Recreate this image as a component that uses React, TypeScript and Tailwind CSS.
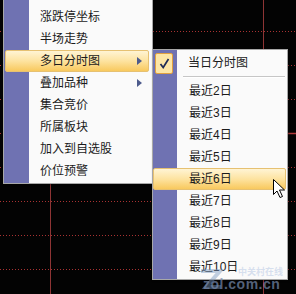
import React from "react";

const leftItems = [
  { label: "涨跌停坐标" },
  { label: "半场走势" },
  { label: "多日分时图", arrow: true, active: true },
  { label: "叠加品种", arrow: true },
  { label: "集合竞价" },
  { label: "所属板块" },
  { label: "加入到自选股" },
  { label: "价位预警" },
];

const subItems = ["最近2日", "最近3日", "最近4日", "最近5日", "最近6日", "最近7日", "最近8日", "最近9日", "最近10日"];

function Arrow() {
  return (
    <svg className="ml-auto mr-[10px]" width="5" height="8" viewBox="0 0 5 8">
      <path d="M0 0 L5 4 L0 8 Z" fill="#4d5b8c" />
    </svg>
  );
}

function Chart() {
  const ys = [31, 65, 99, 133, 167, 201, 235, 269];
  return (
    <svg className="absolute inset-0" width="296" height="294" viewBox="0 0 296 294">
      <rect width="296" height="294" fill="#030303" />
      {ys.map((y) => (
        <line key={y} x1="0" x2="296" y1={y + 0.5} y2={y + 0.5} stroke="#a83232" strokeWidth="1" strokeDasharray="1 2" />
      ))}
      <line x1="287" x2="296" y1="133.5" y2="133.5" stroke="#b03a3a" strokeWidth="1.5" />
      <line x1="50.5" x2="50.5" y1="0" y2="294" stroke="#8e3434" strokeWidth="1" />
      <line x1="263.5" x2="263.5" y1="0" y2="294" stroke="#8e3434" strokeWidth="1" />
    </svg>
  );
}

const hl =
  "rounded-[2px] border border-[#e6c172] bg-[linear-gradient(to_bottom,#fff4d4,#fde3a0_50%,#f8c95e)]";

export default function App() {
  return (
    <div className="relative w-[296px] h-[294px] overflow-hidden bg-black font-['Liberation_Sans','Noto_Sans_CJK_SC',sans-serif] text-[12px] text-[#1b1b1b]">
      <Chart />

      {/* main context menu */}
      <div className="absolute left-[3px] top-[-1px] w-[150px] flex border border-[#a8a8a8] bg-[#fafafa] shadow-[1px_1px_2px_rgba(0,0,0,0.4)]">
        <div className="relative flex-1 flex flex-col pt-[6px] pb-[1px] bg-[linear-gradient(to_right,#6f72b2_25px,transparent_25px)]">
          {leftItems.map((it) =>
            it.active ? (
              <div key={it.label} className={`h-[22px] ml-[1px] mr-[3px] flex items-center pl-[34px] ${hl}`}>
                <span>{it.label}</span>
                <svg className="ml-auto mr-[6px]" width="5" height="8" viewBox="0 0 5 8">
                  <path d="M0 0 L5 4 L0 8 Z" fill="#4d5b8c" />
                </svg>
              </div>
            ) : (
              <div key={it.label} className="h-[22px] flex items-center pl-[36px]">
                <span>{it.label}</span>
                {it.arrow && <Arrow />}
              </div>
            )
          )}
        </div>
      </div>

      {/* submenu */}
      <div className="absolute left-[152px] top-[49px] w-[136px] flex flex-col border border-[#a8a8a8] pt-[2px] pb-[1px] bg-[linear-gradient(to_right,#6f72b2_24px,#fafafa_24px)] shadow-[1px_1px_2px_rgba(0,0,0,0.4)]">
        <div className="h-[22px] flex items-center gap-[15px] pl-[2px]">
          <div className="w-[18px] h-[21px] rounded-[2px] border border-[#e0a040] bg-[#fde6a6] flex items-center justify-center">
            <svg width="11" height="11" viewBox="0 0 11 11">
              <path d="M1.5 6 L4.2 9.5 L9.5 1" fill="none" stroke="#1e2a55" strokeWidth="1.7" />
            </svg>
          </div>
          <span>当日分时图</span>
        </div>
        <div className="h-[6px] pl-[30px] pr-[2px] pt-[2px] flex flex-col">
          <div className="h-px bg-[#c6c6c6]" />
          <div className="h-px bg-white" />
        </div>
        {subItems.map((s) =>
          s === "最近6日" ? (
            <div key={s} className={`h-[22px] mr-[1px] flex items-center pl-[35px] ${hl}`}>
              <span>{s}</span>
            </div>
          ) : (
            <div key={s} className="h-[22px] flex items-center pl-[36px]">
              <span>{s}</span>
            </div>
          )
        )}
      </div>

      {/* watermark */}
      <div className="absolute left-[198px] top-[268px] w-[98px] h-[26px] flex pointer-events-none">
        <svg className="shrink-0 -mr-[24px]" width="26" height="26" viewBox="0 0 26 26">
          <path d="M3 3 L22 3 L8 19 L23 19" fill="none" stroke="rgba(120,150,190,0.45)" strokeWidth="4" />
        </svg>
        <div className="flex flex-col items-start">
          <div className="ml-[38px] text-[9px] leading-[9px] font-bold text-[rgba(190,205,230,0.6)]">中关村在线</div>
          <div className="ml-[3px] text-[14px] leading-[15px] font-bold tracking-[0.5px] text-[rgba(120,140,175,0.7)]">zol.com.cn</div>
        </div>
      </div>

      {/* mouse cursor */}
      <svg className="absolute left-[272px] top-[178px]" width="14" height="21" viewBox="0 0 14 21">
        <path d="M1.5 1.5 L1.5 16.5 L5 13 L8 19.5 L10.5 18.5 L7.5 12 L12.5 12 Z" fill="#ffffff" stroke="#000000" strokeWidth="1" strokeLinejoin="miter" />
      </svg>
    </div>
  );
}
